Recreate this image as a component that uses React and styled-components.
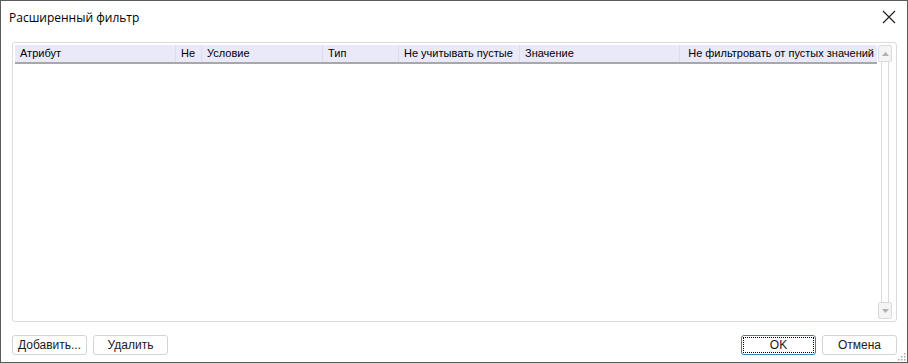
import React from "react";
import styled, { createGlobalStyle } from "styled-components";

const columns = [
  { id: "attr", text: "Атрибут", width: 161 },
  { id: "not", text: "Не", width: 26 },
  { id: "cond", text: "Условие", width: 121 },
  { id: "type", text: "Тип", width: 76 },
  { id: "empty", text: "Не учитывать пустые", width: 121 },
  { id: "value", text: "Значение", width: 160 },
  { id: "nofilter", text: "Не фильтровать от пустых значений", width: 197, right: true },
];

function App() {
  return (
    <>
      <GlobalStyle />
      <Window>
        <TitleBar>
          <Title>Расширенный фильтр</Title>
          <CloseButton aria-label="close">
            <svg width="14" height="14" viewBox="0 0 14 14">
              <path d="M1 1 L13 13 M13 1 L1 13" stroke="#222" strokeWidth="1.2" />
            </svg>
          </CloseButton>
        </TitleBar>

        <Body>
          <GridBox>
            <GridMain>
              <HeaderRow>
                {columns.map((col) => (
                  <HeaderCell key={col.id} $width={col.width} $right={col.right}>
                    {col.text}
                  </HeaderCell>
                ))}
              </HeaderRow>
            </GridMain>
            <ScrollBar>
              <ScrollButton>
                <svg width="7" height="4" viewBox="0 0 7 4">
                  <path d="M0 4 L3.5 0 L7 4 Z" fill="#b0b0b0" />
                </svg>
              </ScrollButton>
              <ScrollThumb />
              <ScrollButton>
                <svg width="7" height="4" viewBox="0 0 7 4">
                  <path d="M0 0 L3.5 4 L7 0 Z" fill="#b0b0b0" />
                </svg>
              </ScrollButton>
            </ScrollBar>
          </GridBox>

          <Footer>
            <ButtonGroup>
              <Button>Добавить...</Button>
              <Button>Удалить</Button>
            </ButtonGroup>
            <ButtonGroup>
              <Button $primary>OK</Button>
              <Button>Отмена</Button>
            </ButtonGroup>
          </Footer>
        </Body>

        <Grip>
          <svg width="10" height="10" viewBox="0 0 10 10">
            {[
              [8, 2], [8, 5], [5, 5], [8, 8], [5, 8], [2, 8],
            ].map(([x, y]) => (
              <rect key={`${x}-${y}`} x={x} y={y} width="1.5" height="1.5" fill="#a8a8a8" />
            ))}
          </svg>
        </Grip>
      </Window>
    </>
  );
}

const GlobalStyle = createGlobalStyle`
  html, body {
    margin: 0;
    padding: 0;
    background: #ffffff;
  }
`;

const Window = styled.div`
  position: relative;
  box-sizing: border-box;
  width: 908px;
  height: 363px;
  border: 1px solid #5a5a5a;
  background: #ffffff;
  display: flex;
  flex-direction: column;
  font-family: "Liberation Sans", Arial, sans-serif;
  color: #000;
`;

const TitleBar = styled.div`
  height: 33px;
  display: flex;
  align-items: center;
  justify-content: space-between;
  padding: 0 10px 0 8px;
  flex-shrink: 0;
`;

const Title = styled.div`
  font-family: "Open Sans", "Noto Sans", sans-serif;
  font-size: 12px;
  margin-top: -1px;
  color: #000;
`;

const CloseButton = styled.div`
  width: 16px;
  height: 16px;
  display: flex;
  align-items: center;
  justify-content: center;
  margin-top: -2px;
`;

const Body = styled.div`
  flex: 1;
  display: flex;
  flex-direction: column;
  padding: 8px 10px 10px 11px;
`;

const GridBox = styled.div`
  height: 274px;
  border: 1px solid #dcdcdc;
  border-radius: 3px;
  padding: 2px 2px 2px 2px;
  display: flex;
  gap: 1px;
`;

const GridMain = styled.div`
  flex: 1;
  display: flex;
  flex-direction: column;
`;

const HeaderRow = styled.div`
  display: flex;
  height: 17px;
  background: #e9e9f9;
  border-bottom: 2px solid #a8a8a8;
`;

const HeaderCell = styled.div`
  box-sizing: border-box;
  width: ${(p) => p.$width}px;
  flex-shrink: 0;
  padding: 0 ${(p) => (p.$right ? "3px" : "0")} 0 5px;
  border-right: 1px solid #dcdcec;
  font-size: 11px;
  line-height: 17px;
  white-space: nowrap;
  overflow: hidden;
  text-align: ${(p) => (p.$right ? "right" : "left")};
  &:last-child {
    border-right: none;
  }
`;

const ScrollBar = styled.div`
  width: 14px;
  display: flex;
  flex-direction: column;
  align-items: center;
  margin-right: 2px;
`;

const ScrollButton = styled.div`
  box-sizing: border-box;
  width: 14px;
  height: 17px;
  border: 1px solid #dadada;
  border-radius: 2px;
  background: #f4f4f4;
  display: flex;
  align-items: center;
  justify-content: center;
`;

const ScrollThumb = styled.div`
  flex: 1;
  width: 8px;
  box-sizing: border-box;
  border-left: 1px solid #dadada;
  border-right: 1px solid #dadada;
`;

const Footer = styled.div`
  display: flex;
  justify-content: space-between;
  margin-top: 13px;
`;

const ButtonGroup = styled.div`
  display: flex;
  gap: 6px;
`;

const Button = styled.div`
  box-sizing: border-box;
  width: 75px;
  height: 20px;
  border: 1px solid ${(p) => (p.$primary ? "#3c7fb1" : "#d4d4d4")};
  border-radius: 3px;
  background: #ffffff;
  display: flex;
  align-items: center;
  justify-content: center;
  font-size: 12px;
  color: #1a1a1a;
  position: relative;
  ${(p) =>
    p.$primary &&
    `
    &::after {
      content: "";
      position: absolute;
      inset: 1px;
      border: 1px dotted #000;
    }
  `}
`;

const Grip = styled.div`
  position: absolute;
  right: 1px;
  bottom: 1px;
  width: 10px;
  height: 10px;
  display: flex;
`;

export default App;
